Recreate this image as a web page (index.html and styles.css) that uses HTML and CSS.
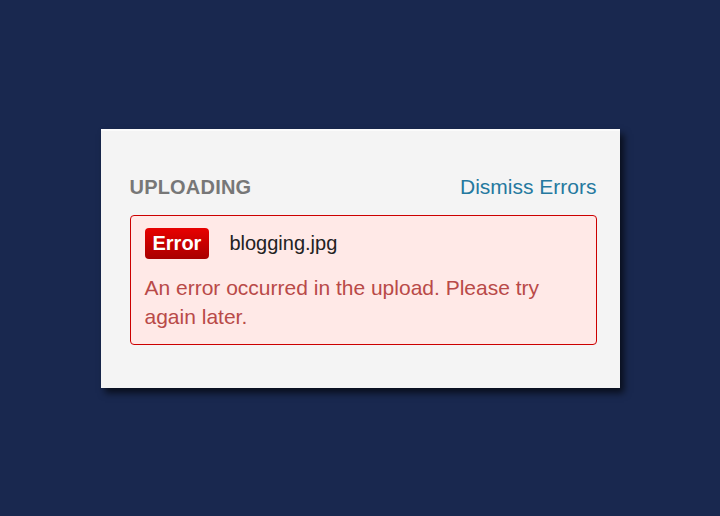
FILE: index.html
```html
<!DOCTYPE html>
<html lang="en">
<head>
    <meta charset="UTF-8">
    <meta name="viewport" content="width=device-width, initial-scale=1.0">
    <title>Uploading</title>
    <link rel="stylesheet" href="styles.css">
</head>
<body>

    <div class="upload-panel">
        <div class="panel-header">
            <h2>Uploading</h2>
            <a href="#" class="dismiss">Dismiss Errors</a>
        </div>
        <div class="upload-error">
            <div class="file-row">
                <span class="badge">Error</span>
                <span class="file-name">blogging.jpg</span>
            </div>
            <p class="message">An error occurred in the upload. Please try again later.</p>
        </div>
    </div>

</body>
</html>
```

FILE: styles.css
```css
html, body {
    height: 100%;
}
body {
    margin: 0;
    background-color: #19284f;
    font-family: 'Liberation Sans', Arial, sans-serif;
    display: flex;
    align-items: center;
    justify-content: center;
}
.upload-panel {
    width: 519px;
    box-sizing: border-box;
    background: #f4f4f4;
    border-top: 2px solid #fbfbfb;
    padding: 42px 23px 43px 29px;
    box-shadow: 4px 5px 7px rgba(0, 0, 0, 0.65);
}
.panel-header {
    display: flex;
    justify-content: space-between;
    align-items: baseline;
    margin-bottom: 14px;
}
.panel-header h2 {
    margin: 0;
    font-size: 20px;
    line-height: 28px;
    font-weight: bold;
    letter-spacing: 0.2px;
    text-transform: uppercase;
    color: #777;
}
.dismiss {
    font-size: 21px;
    color: #25799f;
    text-decoration: none;
}
.upload-error {
    background: #ffe9e7;
    border: 1px solid #cc0000;
    border-radius: 4px;
    padding: 12px 14px 13px 14px;
}
.file-row {
    display: flex;
    align-items: center;
}
.badge {
    background: linear-gradient(#e80000, #a80000);
    color: #fff;
    font-weight: bold;
    font-size: 20px;
    border-radius: 4px;
    padding: 4px 8px 4px 8px;
    line-height: 23px;
}
.file-name {
    margin-left: 20px;
    font-size: 20px;
    color: #222;
}
.message {
    margin: 14px 0 0;
    font-size: 21px;
    line-height: 29px;
    color: #b94a48;
}
```
